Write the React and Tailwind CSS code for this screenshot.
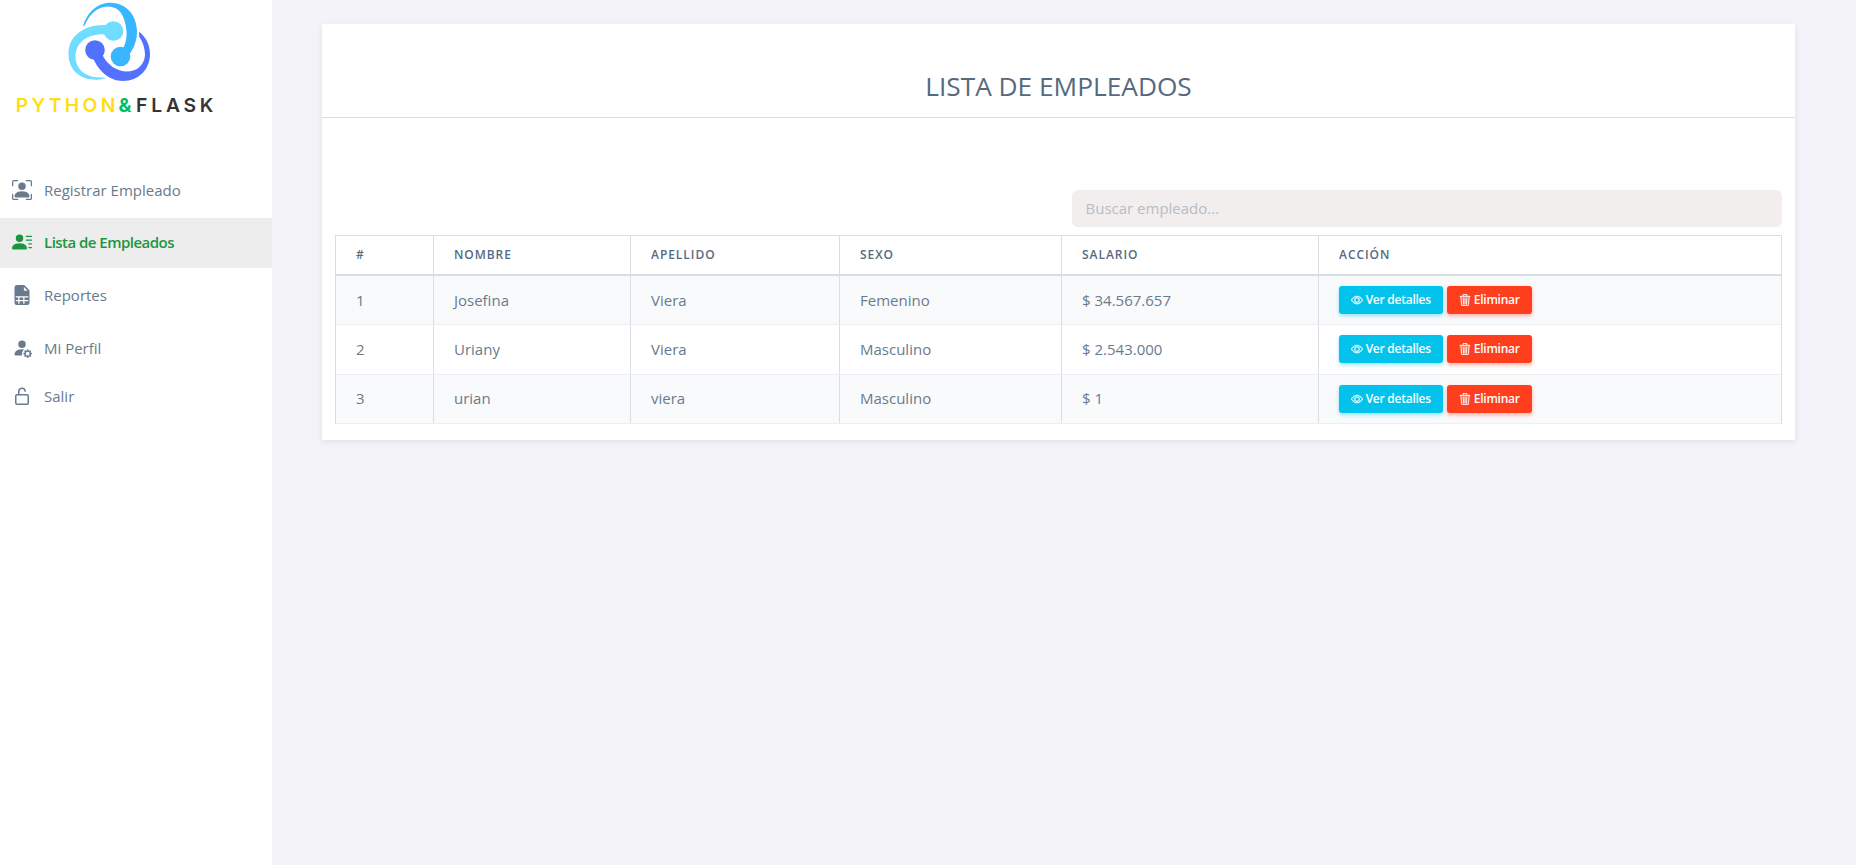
import { BsPersonBoundingBox, BsPersonLinesFill, BsFileEarmarkSpreadsheetFill, BsPersonFillGear, BsEye, BsTrash3 } from "react-icons/bs";

const rows = [
  ["1", "Josefina", "Viera", "Femenino", "$ 34.567.657"],
  ["2", "Uriany", "Viera", "Masculino", "$ 2.543.000"],
  ["3", "urian", "viera", "Masculino", "$ 1"],
];
const heads = ["#", "Nombre", "Apellido", "Sexo", "Salario", "Acción"];
const cols = "grid grid-cols-[97px_197px_209px_222px_257px_1fr]";

function LockOpen({ className }) {
  return (
    <svg className={className} viewBox="0 0 20 20" fill="none" stroke="currentColor" strokeWidth="1.500">
      <rect x="3.750" y="8.750" width="12.500" height="9.500" rx="1.200" />
      <path d="M6.750 8.750V5.500a3.250 3.250 0 0 1 6.400-.8V5.800" />
    </svg>
  );
}

function Logo() {
  return (
    <div className="flex h-[120px] w-[229px] flex-col items-center">
      <svg className="mt-[2px] ml-[-11px] h-[80px] w-[84px]" viewBox="67 2 84 80">
        <path d="M83 26.500 C87 12 98 2.700 110 2.700 C126 2.700 137 15 137 32 C137 40 134.500 47 130 53.500 L122 51 C126 43 127 37 126.500 31 C125 15 119 6.500 108 6.500 C97 6.500 89 15 85 25 Z" fill="#38b6ff" />
        <circle cx="120.500" cy="56.500" r="9.800" fill="#38b6ff" />
        <path d="M107 25 C85 24 68.500 35 68.500 54 C68.500 70 80 80 97 79.700 Q102 79.600 106 78.300 Q101 77.500 97 77.300 C84 76.500 75.500 68 75.500 57 C75.500 42 88 33 107 34.500 Z" fill="#70dcff" />
        <circle cx="113.500" cy="31" r="9.800" fill="#70dcff" />
        <path d="M92 55 C97 70 109 81 123 81 C139 81 150 69 150 54 C150 45 146 37 139 31.700 L139.300 37 C143 42 145 49 145 55 C144.500 65 137 71.500 127 71.500 C117 71.500 107 65 102 54 Z" fill="#5271ff" />
        <circle cx="95" cy="50" r="9.800" fill="#5271ff" />
      </svg>
      <div className="mt-[11px] ml-[4px] flex h-6 font-[Inter] text-[19.3px] leading-6 font-semibold whitespace-nowrap text-[#ffde14]">
        <span className="tracking-[3.300px]">PYTHON</span><span className="font-bold tracking-[4.500px] text-[#00bf63]">&amp;</span><span className="tracking-[3.800px] text-[#343434]">FLASK</span>
      </div>
    </div>
  );
}

function Item({ icon: Icon, label, className }) {
  return (
    <a className={"flex items-center pl-3 " + className}>
      <span className="mr-3 flex w-5 shrink-0 justify-center"><Icon className="size-5" /></span>
      <span>{label}</span>
    </a>
  );
}

export default function App() {
  return (
    <div className="flex h-[865px] bg-[#f4f3f9] font-['Open_Sans',sans-serif] text-[15px] leading-[23px] text-[#697a8d]">
      <aside className="w-[272px] shrink-0 bg-white">
        <Logo />
        <nav className="pt-[45px]">
          <Item icon={BsPersonBoundingBox} label="Registrar Empleado" className="h-[50px]" />
          <Item icon={BsPersonLinesFill} label="Lista de Empleados" className="mt-[3px] h-[50px] bg-[#ededed] pb-[2px] font-semibold tracking-[-0.520px] text-[#1a9641]" />
          <Item icon={BsFileEarmarkSpreadsheetFill} label="Reportes" className="mt-[2px] h-[50px]" />
          <Item icon={BsPersonFillGear} label="Mi Perfil" className="mt-[3px] h-[50px]" />
          <Item icon={LockOpen} label="Salir" className="h-[46px]" />
        </nav>
      </aside>
      <main className="flex-1 pt-6 pr-[61px] pl-[50px]">
        <section className="h-[416px] bg-white shadow-[0_2px_6px_0_rgba(67,89,113,0.12)]">
          <h1 className="flex h-[94px] items-end justify-center border-b border-[#d9dee3] pb-[13px] text-[26.25px] leading-9 text-[#566a7f]">LISTA DE EMPLEADOS</h1>
          <div className="px-[13px] pt-[72px]">
            <div className="flex justify-end">
              <input placeholder="Buscar empleado..." className="h-[37px] w-[710px] rounded-md bg-[#f3eeee] px-[13.5px] pb-[2px] text-[15px] outline-none placeholder:text-[#b4bdc6]" />
            </div>
            <div className="mt-2 border-x border-t border-[#d9dee3]">
              <div className={cols + " h-[40px] border-b-2 border-[#d9dee3]"}>
                {heads.map((h, i) => (
                  <div key={h} className={"flex items-center pl-5 text-xs font-semibold tracking-[0.950px] text-[#566a7f] uppercase " + (i ? "border-l border-[#d9dee3]" : "")}>{h}</div>
                ))}
              </div>
              {rows.map((r, n) => (
                <div key={n} className={cols + " border-b border-[#eceef1] " + (n === 1 ? "h-[50px] bg-white" : "h-[49px] bg-[#f9fafc]")}>
                  {r.map((c, i) => (
                    <div key={i} className={"flex items-center pl-5 " + (n ? "pb-px " : "") + (i ? "border-l border-[#d9dee3]" : "")}>{c}</div>
                  ))}
                  <div className={"flex items-center gap-1 border-l border-[#d9dee3] pl-5 text-xs leading-4 font-semibold text-white " + (n === 1 ? "pb-px" : "")}>
                    <button className="flex h-7 w-[104px] items-center justify-center gap-[2.500px] rounded-[3px] bg-[#03c3ec] tracking-[-0.250px] shadow-[0_2px_4px_0_rgba(3,195,236,0.4)]"><BsEye className="size-3" strokeWidth="0.4" />Ver detalles</button>
                    <button className="flex h-7 w-[85px] items-center justify-center gap-[2.500px] rounded-[3px] bg-[#ff3e1d] tracking-[-0.250px] shadow-[0_2px_4px_0_rgba(255,62,29,0.4)]"><BsTrash3 className="size-3" strokeWidth="0.4" />Eliminar</button>
                  </div>
                </div>
              ))}
            </div>
          </div>
        </section>
      </main>
    </div>
  );
}
